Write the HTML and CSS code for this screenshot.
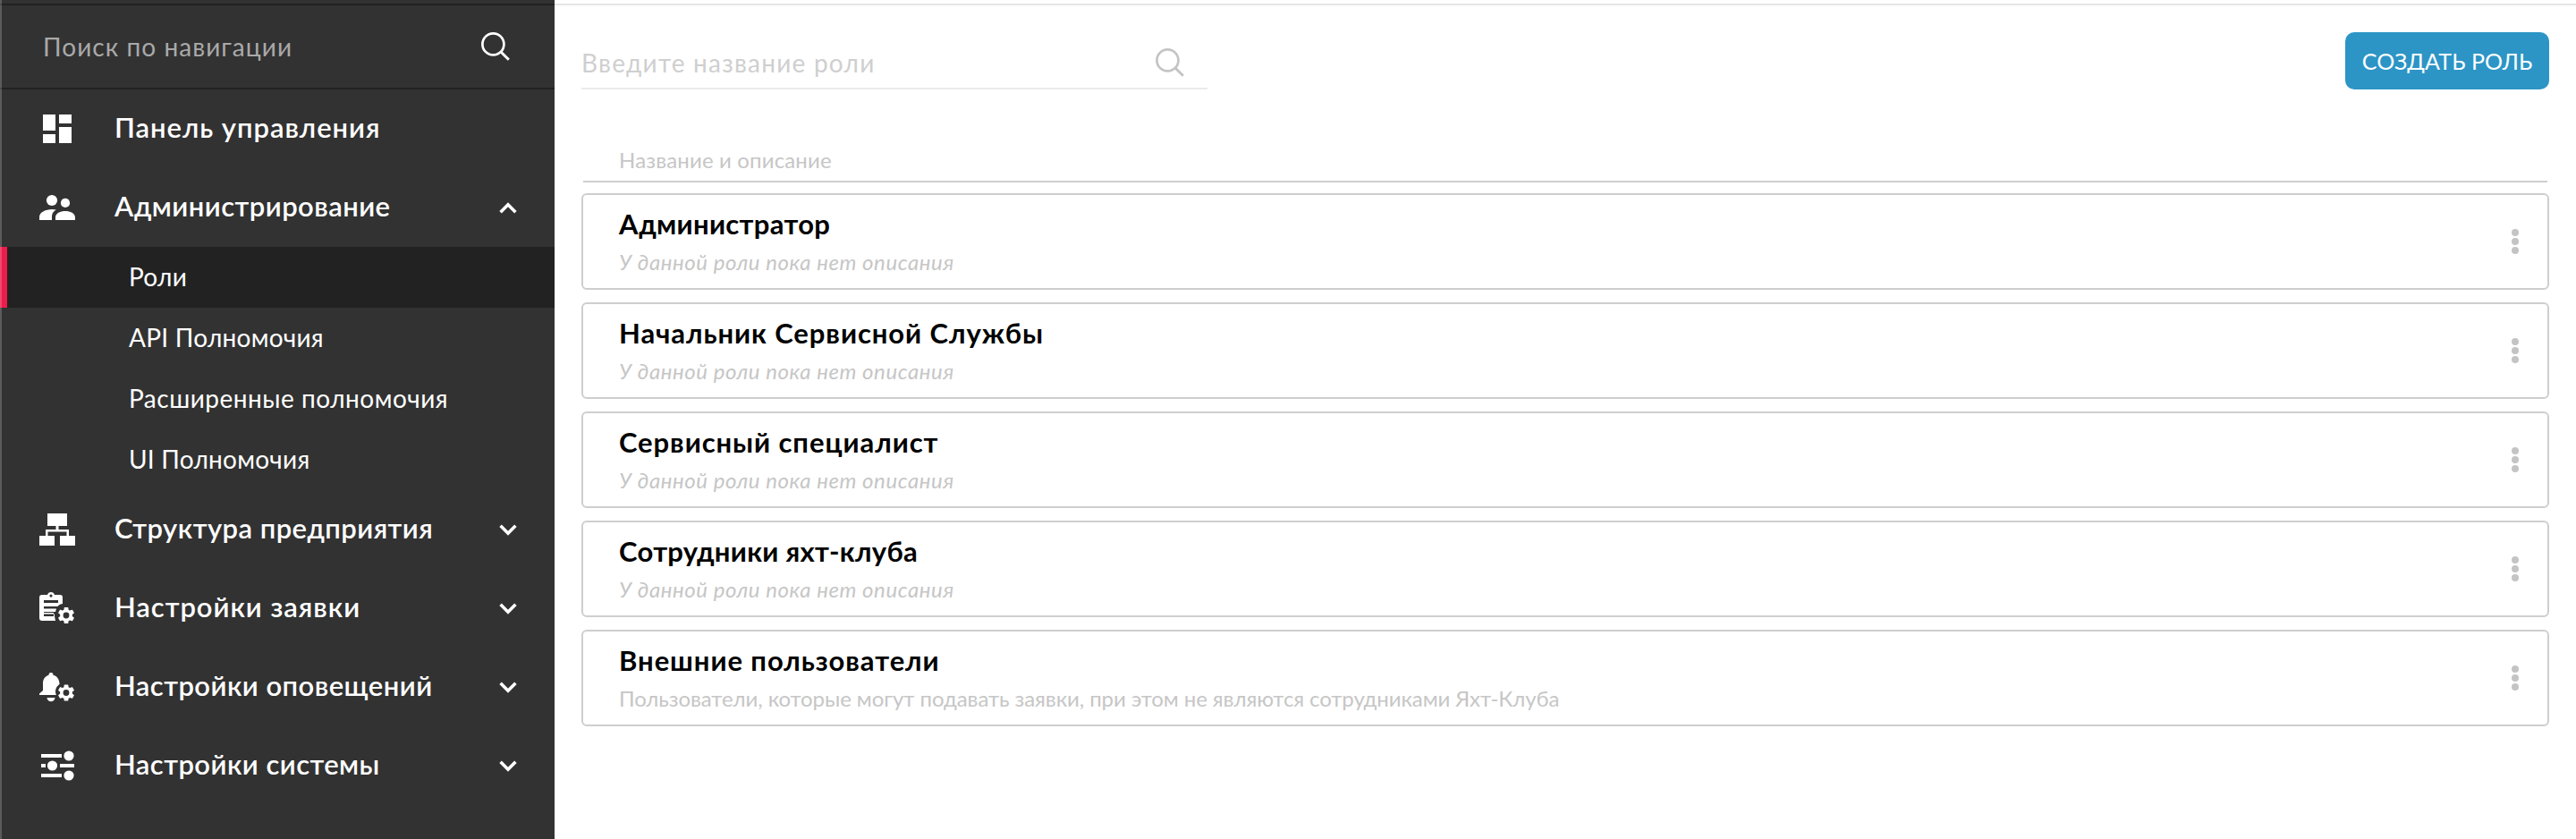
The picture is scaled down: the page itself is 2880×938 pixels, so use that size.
FILE: index.html
```html
<!DOCTYPE html>
<html lang="ru">
<head>
<meta charset="utf-8">
<title>Роли</title>
<link rel="stylesheet" href="styles.css">
</head>
<body>
<svg class="defs" width="0" height="0" aria-hidden="true">
  <symbol id="chevron" viewBox="0 0 20 13"><path d="M1.6 1.8 10 10.2 18.4 1.8" fill="none" stroke="currentColor" stroke-width="3.6"/></symbol>
  <symbol id="search" viewBox="0 0 32 32"><circle cx="13.4" cy="13.4" r="12" fill="none" stroke="currentColor" stroke-width="2.7"/><path d="m22 22 8.8 8.8" fill="none" stroke="currentColor" stroke-width="3"/></symbol>
  <symbol id="dots" viewBox="0 0 8 28"><circle cx="4" cy="4" r="4"/><circle cx="4" cy="14" r="4"/><circle cx="4" cy="24" r="4"/></symbol>
  <symbol id="gear" viewBox="2 2 20 20"><path d="M19.14 12.94c.04-.3.06-.61.06-.94 0-.32-.02-.64-.07-.94l2.03-1.58a.49.49 0 0 0 .12-.61l-1.92-3.32a.49.49 0 0 0-.59-.22l-2.39.96c-.5-.38-1.03-.7-1.62-.94l-.36-2.54a.48.48 0 0 0-.48-.41h-3.84a.47.47 0 0 0-.47.41l-.36 2.54c-.59.24-1.13.57-1.62.94l-2.39-.96a.48.48 0 0 0-.59.22L2.74 8.87a.47.47 0 0 0 .12.61l2.03 1.58c-.05.3-.09.63-.09.94s.02.64.07.94l-2.03 1.58a.49.49 0 0 0-.12.61l1.92 3.32c.12.22.37.29.59.22l2.39-.96c.5.38 1.03.7 1.62.94l.36 2.54c.05.24.24.41.48.41h3.84c.24 0 .44-.17.47-.41l.36-2.54c.59-.24 1.13-.56 1.62-.94l2.39.96c.22.08.47 0 .59-.22l1.92-3.32a.47.47 0 0 0-.12-.61zM12 15.6A3.6 3.6 0 1 1 12 8.4a3.6 3.6 0 0 1 0 7.2z"/></symbol>
</svg>
<div class="app">
  <nav class="sidebar">
    <div class="nav-search"><span class="nav-search-text">Поиск по навигации</span><svg class="icon-search"><use href="#search"/></svg></div>
    <ul class="menu">
      <li class="menu-item">
        <svg class="menu-icon" viewBox="0 0 40 40"><path d="M4 4h14v18H4zM22 4h14v10H22zM4 26h14v10H4zM22 18h14v18H22z"/></svg>
        <span class="menu-label wide">Панель управления</span>
      </li>
      <li class="menu-item">
        <svg class="menu-icon" viewBox="0 0 40 40"><circle cx="14" cy="12" r="6.1"/><circle cx="29" cy="14.9" r="5.1"/><path d="M0 34v-3.500C0 25.500 7 22 14 22c1.800 0 3.500.200 4.800.600C15.500 24.500 14 27 14 30v4zM18 34v-3c0-4.500 5.500-7 11-7s11 2.500 11 7v3z"/></svg>
        <span class="menu-label">Администрирование</span>
        <svg class="chevron up"><use href="#chevron"/></svg>
      </li>
      <li>
        <ul class="submenu">
          <li class="sub-item active">Роли</li>
          <li class="sub-item">API Полномочия</li>
          <li class="sub-item wide">Расширенные полномочия</li>
          <li class="sub-item">UI Полномочия</li>
        </ul>
      </li>
      <li class="menu-item">
        <svg class="menu-icon" viewBox="0 0 40 40"><path d="M9 2h22v14h-9.500v4H33v7h7v11H23V27h7.500v-4.500h-21V27H17v11H0V27h7v-7h11.500v-4H9z"/></svg>
        <span class="menu-label">Структура предприятия</span>
        <svg class="chevron"><use href="#chevron"/></svg>
      </li>
      <li class="menu-item">
        <svg class="menu-icon" viewBox="0 0 40 40"><path fill-rule="evenodd" d="M3 5h6a4.200 4.200 0 0 1 8 0h6a3 3 0 0 1 3 3v7c-3 .500-5 2-5.500 3H5v2.500h14L18 24H5v2.500h12v2.500l1 5H3a3 3 0 0 1-3-3V8a3 3 0 0 1 3-3zM5 11v3h16v-3zM5 25v4h11v-4zM13 4.500a1.600 1.600 0 1 0 0 3.200 1.600 1.600 0 0 0 0-3.200z"/><use href="#gear" x="20.500" y="18" width="19" height="20"/></svg>
        <span class="menu-label wide">Настройки заявки</span>
        <svg class="chevron"><use href="#chevron"/></svg>
      </li>
      <li class="menu-item">
        <svg class="menu-icon" viewBox="0 0 40 40"><path d="M13 4a2.400 2.400 0 0 1 2.400 2.800C20.500 8 22.500 12.500 22.500 17c-2.500 1.500-4.500 4.500-4.500 8 0 1.500.300 2.500.800 4H0v-1.500L4 24v-8c0-4.500 2.500-8.200 6.600-9.200A2.400 2.400 0 0 1 13 4zM8.500 32h9a4.500 4.200 0 0 1-9 0z"/><use href="#gear" x="20.500" y="17" width="19" height="19"/></svg>
        <span class="menu-label">Настройки оповещений</span>
        <svg class="chevron"><use href="#chevron"/></svg>
      </li>
      <li class="menu-item">
        <svg class="menu-icon" viewBox="0 0 40 40"><circle cx="33" cy="9" r="5.600"/><circle cx="14.500" cy="20" r="5.600"/><circle cx="33" cy="31" r="5.600"/><path d="M2 7h23v4H2zM2 18h5v4H2zM23 18h16v4H23zM2 29h23v4H2z"/></svg>
        <span class="menu-label">Настройки системы</span>
        <svg class="chevron"><use href="#chevron"/></svg>
      </li>
    </ul>
  </nav>
  <main class="main">
    <header class="toolbar">
      <div class="role-search"><span>Введите название роли</span><svg class="icon-search"><use href="#search"/></svg></div>
      <button class="create">СОЗДАТЬ РОЛЬ</button>
    </header>
    <div class="list-head">Название и описание</div>
    <section class="roles">
      <article class="role">
        <div class="role-body"><h2 class="role-name">Администратор</h2><p class="role-text empty">У данной роли пока нет описания</p></div>
        <svg class="dots"><use href="#dots"/></svg>
      </article>
      <article class="role">
        <div class="role-body"><h2 class="role-name wide">Начальник Сервисной Службы</h2><p class="role-text empty">У данной роли пока нет описания</p></div>
        <svg class="dots"><use href="#dots"/></svg>
      </article>
      <article class="role">
        <div class="role-body"><h2 class="role-name wide">Сервисный специалист</h2><p class="role-text empty">У данной роли пока нет описания</p></div>
        <svg class="dots"><use href="#dots"/></svg>
      </article>
      <article class="role">
        <div class="role-body"><h2 class="role-name">Сотрудники яхт-клуба</h2><p class="role-text empty">У данной роли пока нет описания</p></div>
        <svg class="dots"><use href="#dots"/></svg>
      </article>
      <article class="role">
        <div class="role-body"><h2 class="role-name wide">Внешние пользователи</h2><p class="role-text">Пользователи, которые могут подавать заявки, при этом не являются сотрудниками Яхт-Клуба</p></div>
        <svg class="dots"><use href="#dots"/></svg>
      </article>
    </section>
  </main>
</div>
</body>
</html>
```
FILE: styles.css
```css
* { box-sizing: border-box; }
body { margin: 0; background: #fff; font-family: Lato, "Open Sans", sans-serif; }
ul { list-style: none; margin: 0; padding: 0; }
.defs { position: absolute; }
.app { display: flex; height: 938px; overflow: hidden; }

.sidebar { position: relative; width: 620px; padding-top: 4px; background: #323232; color: #fff; }
.sidebar::after { content: ""; position: absolute; inset: 0 auto 0 0; width: 2px; background: rgba(255, 255, 255, .2); }
.nav-search { display: flex; justify-content: space-between; align-items: center; height: 96px; padding: 0 50px 0 48px; border-top: 2px solid #222; border-bottom: 2px solid #222; }
.nav-search-text { padding-bottom: 1px; color: #a9a9a9; font-size: 28px; letter-spacing: 1.050px; }
.icon-search { width: 32px; height: 32px; }

.menu-item { display: flex; align-items: center; height: 88px; padding: 0 42px 0 44px; }
.menu-icon { width: 40px; height: 40px; margin-right: 44px; fill: #fff; }
.menu-label { flex: 1; padding-bottom: 4px; font-size: 31px; font-weight: 600; letter-spacing: .450px; white-space: nowrap; }
.menu-label.wide { letter-spacing: .950px; }
.chevron { width: 20px; height: 13px; }
.chevron.up { transform: rotate(180deg); }
.sub-item { height: 68px; padding-left: 144px; font-size: 28px; line-height: 66px; letter-spacing: .250px; }
.sub-item.wide { letter-spacing: .5px; }
.sub-item.active { padding-left: 136px; border-left: 8px solid #ec1c4b; background: #222; }

.main { flex: 1; margin-top: 4px; padding: 30px 30px 0; border-top: 2px solid #e5e5e5; }
.toolbar { display: flex; justify-content: space-between; align-items: flex-start; height: 64px; }
.role-search { display: flex; justify-content: space-between; align-items: center; width: 700px; height: 64px; padding: 6px 26px 0 0; border-bottom: 2px solid #ebebeb; color: #cfcfcf; font-size: 28px; letter-spacing: 1.220px; }
.role-search .icon-search { color: #c4c4c4; }
.create { width: 228px; height: 64px; padding: 0; border: 0; border-radius: 10px; background: #2c95c6; color: #fff; font: 25px/60px Lato, sans-serif; letter-spacing: .1px; }
.list-head { height: 104px; margin: 0 2px 12px; padding: 64px 0 0 40px; border-bottom: 2px solid #cecece; color: #c6c6c6; font-size: 24px; line-height: 29px; letter-spacing: .150px; }
.roles { display: flex; flex-direction: column; gap: 14px; }
.role { display: flex; justify-content: space-between; align-items: center; height: 108px; padding: 0 32px 0 40px; border: 2px solid #cecece; border-radius: 6px; }
.role-body { padding-top: 2px; }
.role-name { margin: 0; color: #000; font-size: 31px; font-weight: 700; line-height: 44px; letter-spacing: .3px; }
.role-name.wide { letter-spacing: .930px; }
.role-text { margin: 0; color: #c6c6c6; font-size: 24px; line-height: 42px; letter-spacing: -.080px; }
.role-text.empty { font-style: italic; letter-spacing: .550px; }
.dots { width: 8px; height: 28px; fill: #c4c4c4; }
```
